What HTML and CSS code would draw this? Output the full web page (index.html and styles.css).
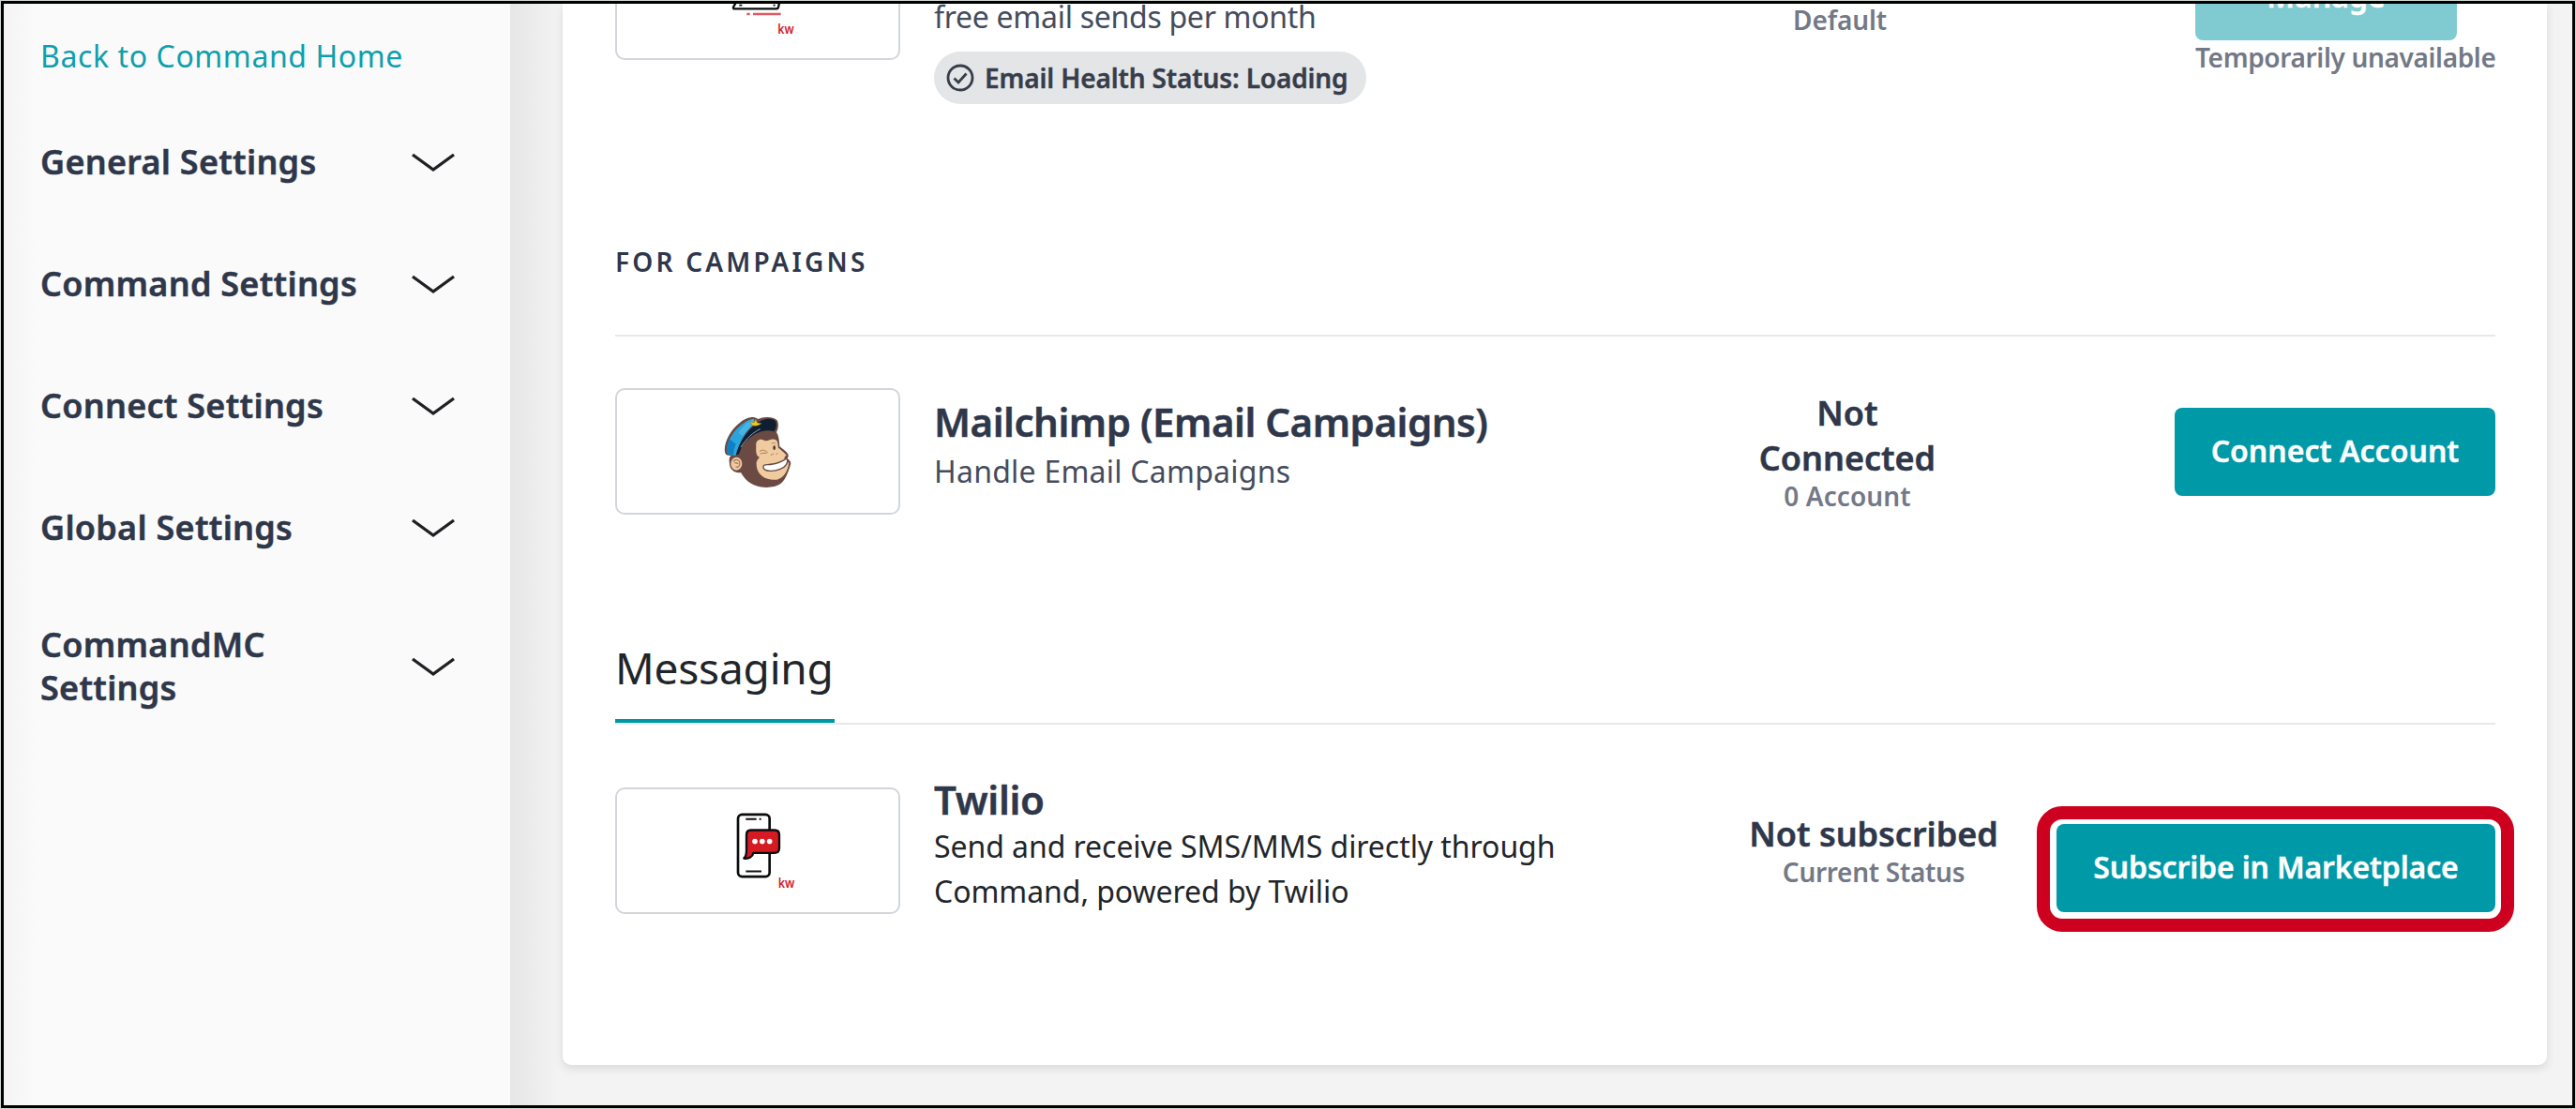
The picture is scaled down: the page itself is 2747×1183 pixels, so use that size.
FILE: index.html
```html
<!DOCTYPE html>
<html lang="en">
<head>
<meta charset="utf-8">
<title>Command Settings</title>
<link rel="stylesheet" href="styles.css">
</head>
<body>
<div class="frame">
  <aside class="sidebar">
    <a class="back">Back to Command Home</a>
    <nav class="nav">
      <div class="nav-item"><span>General Settings</span><svg class="chevron" viewBox="0 0 48 22"><path d="M2 3 24 19 46 3"/></svg></div>
      <div class="nav-item"><span>Command Settings</span><svg class="chevron" viewBox="0 0 48 22"><path d="M2 3 24 19 46 3"/></svg></div>
      <div class="nav-item"><span>Connect Settings</span><svg class="chevron" viewBox="0 0 48 22"><path d="M2 3 24 19 46 3"/></svg></div>
      <div class="nav-item"><span>Global Settings</span><svg class="chevron" viewBox="0 0 48 22"><path d="M2 3 24 19 46 3"/></svg></div>
      <div class="nav-item nav-item-tall"><span>CommandMC Settings</span><svg class="chevron" viewBox="0 0 48 22"><path d="M2 3 24 19 46 3"/></svg></div>
    </nav>
  </aside>

  <main class="main">
    <section class="card">
      <div class="row row-email">
        <div class="logo">
          <svg viewBox="-36 -177 300 330">
            <path d="M52 -60H170V-6H52Z" fill="none" stroke="#0b0c0d" stroke-width="8"/>
            <path d="M46 2 36 20Q35 25 40 25H174Q179 25 180 20L184 2" fill="#fff" stroke="#0b0c0d" stroke-width="7"/>
            <path d="M55 14H64M164 14H170" fill="none" stroke="#0b0c0d" stroke-width="5"/>
            <path d="M79 42H89M99 42H188" stroke="#dc5a60" stroke-width="8"/>
            <text class="kw" x="178" y="106" textLength="52" lengthAdjust="spacingAndGlyphs">kw</text>
          </svg>
        </div>
        <div class="info">
          <div class="desc desc-free">free email sends per month</div>
          <div class="pill">
            <svg class="check" viewBox="0 0 30 30"><circle cx="15" cy="15" r="13"/><path d="M8.500 15.500 13 20 21.500 10.500"/></svg>
            <span>Email Health Status: Loading</span>
          </div>
        </div>
        <div class="status"><div class="sub">Default</div></div>
        <div class="action">
          <div class="manage">
            <button class="btn btn-disabled">Manage</button>
            <div class="sub sub-temp">Temporarily unavailable</div>
          </div>
        </div>
      </div>

      <h3 class="group">FOR CAMPAIGNS</h3>

      <div class="row row-mailchimp">
        <div class="logo">
          <svg viewBox="-6 0 300 270">
            <path d="M44 145C34 136 38 108 51 84C68 52 104 22 128 24C136 24 142 28 146 30C160 22 192 20 206 34C212 44 210 62 204 72C212 84 213 100 214 118C222 124 236 134 240 141C244 146 242 153 238 156C244 160 250 166 250 172C242 202 232 226 216 238C196 252 156 252 130 240C112 232 98 216 90 201C72 205 55 192 54 174C52 162 52 154 58 148Z" fill="#6a4a42"/>
            <path d="M50 142C40 134 46 106 60 84C76 58 106 32 130 30L136 44C108 64 86 100 76 146C66 146 58 148 50 142Z" fill="#2ba3dc"/>
            <path d="M50 142C42 134 45 114 54 94L74 110C68 124 66 136 66 147Z" fill="#0f7fc6"/>
            <path d="M132 30 134 44C118 56 106 70 96 84L82 74C96 54 114 34 132 30Z" fill="#49b4e4"/>
            <path d="M74 146C84 104 110 66 144 42C166 26 192 26 202 38C206 50 202 62 196 70C164 60 126 76 98 112C90 122 88 132 84 142Z" fill="#0e1f33"/>
            <path d="M90 120C108 92 130 72 152 62" fill="none" stroke="#9aa5a8" stroke-width="3"/>
            <path d="M120 38 132 42 138 30 142 42 156 44 146 50 136 52 126 50Z" fill="#f1c928" stroke="#8a7412" stroke-width="1.500"/>
            <ellipse cx="76" cy="173" rx="18" ry="21" fill="#efc9a2"/>
            <path d="M66 166C74 154 90 162 86 176C84 184 78 186 74 182M70 170 82 172" fill="none" stroke="#a67558" stroke-width="3.500"/>
            <path d="M139 116C136 98 152 90 164 98C176 104 190 88 202 97C210 102 208 112 210 122C220 130 232 140 236 146C226 154 226 158 244 170C240 198 226 220 204 224C172 228 140 210 140 174C138 164 146 158 150 152C138 148 138 132 139 116Z" fill="#f0cb9f"/>
            <path d="M162 184C160 172 176 178 192 174C212 172 226 162 237 156C244 168 234 184 216 190C198 198 164 200 162 184Z" fill="#fff" stroke="#6a4a42" stroke-width="4"/>
            <path d="M150 134C158 126 170 130 176 138M152 142C158 138 166 138 172 140M186 147Q190 140 195 142M203 143 208 139" fill="none" stroke="#a87a58" stroke-width="3"/>
            <ellipse cx="197" cy="122" rx="4" ry="7" fill="#51362f"/>
            <path d="M188 108Q196 104 202 108" fill="none" stroke="#b98a66" stroke-width="3"/>
            <circle cx="227" cy="239" r="3" fill="none" stroke="#ddd"/>
          </svg>
        </div>
        <div class="info">
          <h2 class="title title-mailchimp">Mailchimp (Email Campaigns)</h2>
          <div class="desc desc-handle">Handle Email Campaigns</div>
        </div>
        <div class="status"><div class="state">Not Connected</div><div class="sub sub-account">0 Account</div></div>
        <div class="action"><button class="btn btn-connect">Connect Account</button></div>
      </div>

      <div class="section"><h2 class="section-title">Messaging</h2></div>

      <div class="row row-twilio">
        <div class="logo">
          <svg viewBox="354 577.5 300 330">
            <rect x="441" y="625" width="101" height="199" rx="13" fill="#fff" stroke="#0b0c0d" stroke-width="8"/>
            <path d="M466 640H500M509 640H515M466 807H516" stroke="#111" stroke-width="6"/>
            <path d="M482 675H558Q573 675 573 690V733Q573 748 558 748H490C488 760 476 768 460 765C468 758 468 750 468 740V690Q468 675 482 675Z" fill="#d51a22" stroke="#0b0c0d" stroke-width="7" stroke-linejoin="round"/>
            <g fill="#fff"><circle cx="495" cy="711" r="8.500"/><circle cx="518.500" cy="711" r="8.500"/><circle cx="542" cy="711" r="8.500"/></g>
            <text class="kw" x="569" y="858" textLength="53" lengthAdjust="spacingAndGlyphs">kw</text>
          </svg>
        </div>
        <div class="info">
          <h2 class="title">Twilio</h2>
          <div class="desc desc-dark">Send and receive SMS/MMS directly through<br>Command, powered by Twilio</div>
        </div>
        <div class="status"><div class="state">Not subscribed</div><div class="sub sub-current">Current Status</div></div>
        <div class="action"><div class="highlight"><button class="btn btn-subscribe">Subscribe in Marketplace</button></div></div>
      </div>
    </section>
  </main>
</div>
</body>
</html>
```

FILE: styles.css
```css
* { box-sizing: border-box; }
body { margin: 0; padding: 1px; width: 2747px; height: 1183px; background: #cfd6d2; overflow: hidden; font-family: "Noto Sans", sans-serif; color: #2f374a; }
h2, h3 { margin: 0; font-weight: 600; }
svg { display: block; }

.frame { display: flex; height: 1181px; border: 3px solid #000; background: #f3f3f3; overflow: hidden; }

.sidebar { width: 540px; flex: none; padding: 33px 58px 0 39px; background: linear-gradient(90deg, #f4f4f4, #fafafa 34px); }
.back { display: block; font-size: 32px; line-height: 46px; letter-spacing: .6px; color: #0d9fad; white-space: nowrap; }
.nav { padding-top: 25px; }
.nav-item { display: flex; align-items: center; justify-content: space-between; padding: 42px 0; font-size: 36px; line-height: 46px; font-weight: 600; letter-spacing: .26px; -webkit-text-stroke: .5px; }
.nav-item span { max-width: 345px; }
.nav-item-tall { padding-top: 37px; }
.nav-item-tall span { width: 260px; }
.chevron { width: 48px; height: 22px; margin-top: -1px; fill: none; stroke: #1f2023; stroke-width: 3.4px; }

.main { flex: 1; padding: 0 27px 0 56px; background: linear-gradient(90deg, #e6e6e6, #f3f3f3 52px); }
.card { height: 1132px; padding: 0 55px 0 56px; background: #fff; border-radius: 0 0 9px 9px; box-shadow: 0 4px 10px rgba(40, 40, 70, .12); }

.row { display: grid; align-items: start; }
.row-email { grid-template-columns: 341px 1fr 200px 599px; height: 107px; }
.row-mailchimp { grid-template-columns: 341px 1fr 200px 591px; height: 135px; margin-top: 55px; }
.row-twilio { grid-template-columns: 341px 1fr 266px 530px; height: 135px; margin-top: 67px; }

.logo { display: flex; align-items: center; justify-content: center; width: 304px; height: 135px; border: 2px solid #d2d6da; border-radius: 10px; }
.logo svg { width: 100px; flex: none; }
.row-email .logo { margin-top: -75px; }
.kw { font: 600 42px "Noto Sans", sans-serif; fill: #d3222b; }

.title { font-size: 42px; line-height: 52px; letter-spacing: -.3px; white-space: nowrap; -webkit-text-stroke: .5px; }
.title-mailchimp { letter-spacing: -.47px; }
.info { margin-left: -1px; }
.row-mailchimp .info { padding-top: 10px; }
.row-twilio .info { margin-top: -13px; }
.desc { font-size: 32px; line-height: 48px; color: #454c5c; white-space: nowrap; }
.row-email .info { margin-top: -10px; }
.desc-free { letter-spacing: -.28px; }
.desc-handle { margin-top: 3px; letter-spacing: .24px; }
.desc-dark { color: #212529; letter-spacing: -.06px; }

.pill { display: flex; align-items: center; gap: 11px; width: 461px; height: 56px; margin-top: 13px; padding: 0 0 1px 13px; border-radius: 28px; background: #e3e5e7; font-size: 28px; font-weight: 600; letter-spacing: -.14px; white-space: nowrap; color: #373d4a; -webkit-text-stroke: .4px; }
.check { width: 30px; height: 30px; flex: none; fill: none; stroke: #373d4a; stroke-width: 2.8px; }

.status { text-align: center; }
.row-email .status { margin-top: -1px; }
.row-mailchimp .status { padding-top: 3px; }
.row-twilio .status { padding-top: 26px; }
.state { font-size: 36px; line-height: 48px; font-weight: 600; letter-spacing: -.02px; -webkit-text-stroke: .5px; }
.sub { font-size: 28px; line-height: 32px; font-weight: 600; letter-spacing: -.14px; color: #737986; white-space: nowrap; }
.row-email .sub { line-height: 36px; }
.sub-account { letter-spacing: .1px; }
.sub-current { letter-spacing: -.3px; }
.row-email .sub-temp { letter-spacing: -.35px; }

.action { display: flex; justify-content: flex-end; }
.manage { width: 320px; margin-top: -55px; }
.btn { display: block; height: 94px; padding: 0 0 3px; border: 0; border-radius: 8px; background: #0099a8; color: #fff; font: 600 32px "Noto Sans", sans-serif; white-space: nowrap; -webkit-text-stroke: .4px; }
.btn-disabled { width: 279px; padding-bottom: 1px; background: #80cbd1; }
.btn-connect { width: 342px; margin-top: 21px; letter-spacing: .03px; }
.btn-subscribe { width: 468px; letter-spacing: -.16px; }
.highlight { position: relative; margin-top: 39px; }
.highlight::after { content: ""; position: absolute; inset: -19px -20px -21px -21px; border: 14px solid #ce001f; border-radius: 27px; }

.group { margin-top: 148px; padding-bottom: 58px; border-bottom: 2px solid #e6e8ea; font-size: 28px; line-height: 40px; letter-spacing: 3.2px; }
.section { display: flex; margin-top: 132px; border-bottom: 2px solid #e6e8ea; }
.section-title { width: 234px; padding: 1px 0 25px; border-bottom: 4px solid #0097a4; font-size: 46px; line-height: 60px; font-weight: 400; letter-spacing: -.2px; color: #212529; }
```
